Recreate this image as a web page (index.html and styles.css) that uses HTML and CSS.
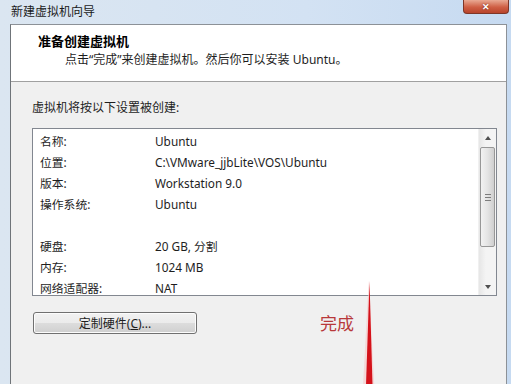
FILE: index.html
```html
<!DOCTYPE html>
<html>
  <head>
    <title>新建虚拟机向导</title>
    <link rel="stylesheet" href="styles.css">
  </head>
  <body>
    <div class="window">
      <div class="titlebar">
        <span class="caption">新建虚拟机向导</span>
        <div class="close">&#x2715;</div>
      </div>
      <div class="frame">
        <div class="client">
          <div class="header">
            <div class="header-title">准备创建虚拟机</div>
            <div class="header-sub">点击“完成”来创建虚拟机。然后你可以安装 Ubuntu。</div>
          </div>
          <div class="content">
            <div class="intro">虚拟机将按以下设置被创建:</div>
            <div class="listbox">
              <div class="rows">
                <div class="row"><span>名称:</span><span>Ubuntu</span></div>
                <div class="row"><span>位置:</span><span>C:\VMware_jjbLite\VOS\Ubuntu</span></div>
                <div class="row"><span>版本:</span><span>Workstation 9.0</span></div>
                <div class="row"><span>操作系统:</span><span>Ubuntu</span></div>
                <div class="row"><span></span><span></span></div>
                <div class="row"><span>硬盘:</span><span>20 GB, 分割</span></div>
                <div class="row"><span>内存:</span><span>1024 MB</span></div>
                <div class="row"><span>网络适配器:</span><span>NAT</span></div>
              </div>
              <div class="scrollbar">
                <div class="arrow up"></div>
                <div class="track">
                  <div class="thumb"><span class="grip"></span></div>
                </div>
                <div class="arrow down"></div>
              </div>
            </div>
            <button class="btn">定制硬件(<u>C</u>)...</button>
          </div>
        </div>
      </div>
    </div>

    <!-- 标注 -->
    <div class="note">完成</div>
    <svg class="pointer" width="20" height="104" viewBox="0 0 20 104">
      <polygon points="9,0 13,104 5,104" fill="#f7c6c6" opacity="0.6" transform="scale(1.4,1) translate(-2.8,0)"/>
      <polygon points="9.5,0 12.5,104 6,104" fill="#d4121a"/>
    </svg>
  </body>
</html>
```

FILE: styles.css
```css
body {
  margin: 0;
  font-family: "Noto Sans", "Noto Sans CJK SC", sans-serif;
  font-size: 12px;
  color: #1e1e1e;
  background: #e6edf4;
  overflow: hidden;
}

.window {
  width: 511px;
  height: 384px;
  display: flex;
  flex-direction: column;
  background: linear-gradient(90deg, #dbe6f1 0%, #d3e2f3 60%, #c6daf1 100%);
}

.titlebar {
  height: 24px;
  display: flex;
  align-items: flex-start;
  justify-content: space-between;
}

.caption {
  padding: 3px 0 0 11px;
  font-size: 12px;
  line-height: 17px;
  color: #1a1a1a;
}

.close {
  width: 44px;
  height: 13px;
  margin-right: 2px;
  border: 1px solid #7e3627;
  border-top: none;
  border-radius: 0 0 4px 4px;
  background: linear-gradient(#e9a993, #cf5f44 55%, #b8442c);
  color: #fff;
  font-size: 9px;
  font-weight: bold;
  line-height: 13px;
  text-align: center;
  text-shadow: 0 0 2px #6a1f10;
}

.frame {
  flex: 1;
  display: flex;
  padding: 0 4px 0 10px;
}

.client {
  flex: 1;
  display: flex;
  flex-direction: column;
  border-left: 1px solid #6f7479;
  border-right: 1px solid #8c9197;
  border-top: 1px solid #8c9197;
  background: #f0f0f0;
}

.header {
  height: 56px;
  background: #fff;
  border-bottom: 1px solid #a0a0a0;
  padding-left: 27px;
}

.header-title {
  margin-top: 8px;
  font-size: 13px;
  font-weight: bold;
  line-height: 17px;
  color: #000;
}

.header-sub {
  margin-top: 1px;
  padding-left: 27px;
  line-height: 17px;
}

.content {
  padding: 18px 8px 0 21px;
  display: flex;
  flex-direction: column;
  align-items: flex-start;
}

.intro {
  line-height: 16px;
  margin-bottom: 12px;
}

.listbox {
  width: 463px;
  height: 166px;
  border: 1px solid #828790;
  background: #fff;
  display: flex;
  overflow: hidden;
}

.rows {
  flex: 1;
  padding: 2px 0 0 7px;
}

.row {
  display: grid;
  grid-template-columns: 115px 1fr;
  height: 21px;
  line-height: 21px;
  font-size: 11.8px;
}

.scrollbar {
  width: 17px;
  display: flex;
  flex-direction: column;
  background: linear-gradient(90deg, #e6e6e6, #f4f4f4 40%, #f4f4f4);
  border-left: 1px solid #f0f0f0;
}

.arrow {
  height: 17px;
  display: flex;
  align-items: center;
  justify-content: center;
}

.arrow::before {
  content: "";
  border-left: 3.5px solid transparent;
  border-right: 3.5px solid transparent;
}

.up::before {
  border-bottom: 4px solid #505050;
}

.down::before {
  border-top: 4px solid #505050;
}

.track {
  flex: 1;
  padding-top: 1px;
}

.thumb {
  height: 98px;
  margin: 0 1px;
  border: 1px solid #979797;
  border-radius: 2px;
  background: linear-gradient(90deg, #f2f2f2, #e4e4e4 50%, #cfcfcf);
  display: flex;
  align-items: center;
  justify-content: center;
}

.grip {
  width: 6px;
  height: 7px;
  background: repeating-linear-gradient(#7d7d7d 0 1px, transparent 1px 3px);
}

.btn {
  margin: 16px 0 0 1px;
  width: 164px;
  height: 22px;
  border: 1px solid #707070;
  border-radius: 3px;
  background: linear-gradient(#f2f2f2, #ebebeb 50%, #dddddd 50%, #cfcfcf);
  box-shadow: inset 0 0 0 1px #fcfcfc;
  font-family: "Noto Sans", "Noto Sans CJK SC", sans-serif;
  font-size: 12px;
  color: #1e1e1e;
  padding: 0;
}

.note {
  position: absolute;
  left: 320px;
  top: 313px;
  font-size: 17px;
  line-height: 22px;
  color: #b8383a;
}

.pointer {
  position: absolute;
  left: 360px;
  top: 281px;
}
```
